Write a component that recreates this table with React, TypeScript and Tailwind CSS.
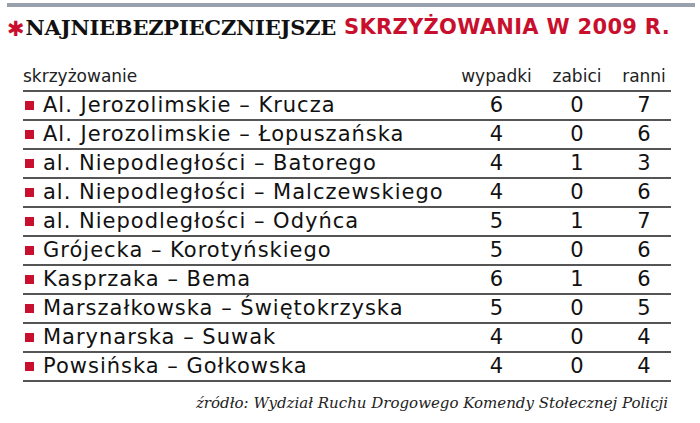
import React from "react";

const rows: [string, number, number, number][] = [
  ["Al. Jerozolimskie – Krucza", 6, 0, 7],
  ["Al. Jerozolimskie – Łopuszańska", 4, 0, 6],
  ["al. Niepodległości – Batorego", 4, 1, 3],
  ["al. Niepodległości – Malczewskiego", 4, 0, 6],
  ["al. Niepodległości – Odyńca", 5, 1, 7],
  ["Grójecka – Korotyńskiego", 5, 0, 6],
  ["Kasprzaka – Bema", 6, 1, 6],
  ["Marszałkowska – Świętokrzyska", 5, 0, 5],
  ["Marynarska – Suwak", 4, 0, 4],
  ["Powsińska – Gołkowska", 4, 0, 4],
];

export default function App() {
  return (
    <div className="w-[700px] h-[423px] bg-white overflow-hidden pt-[3px]">
      <div className="ml-[7px] w-[688px] pt-[4px] border-t-4 border-gray-400">
        <div className="flex items-center h-[34px] whitespace-nowrap">
          <span className="text-[#c8102e] text-[21px] leading-none mt-[3px] mr-[1px]" style={{ fontFamily: '"DejaVu Sans", sans-serif' }}>✱</span>
          <span className="text-[#111] text-[21px] font-bold tracking-[-0.2px]" style={{ fontFamily: '"DejaVu Serif", serif' }}>NAJNIEBEZPIECZNIEJSZE</span>
          <span className="text-[#c8102e] text-[21px] font-bold tracking-[0.3px] ml-[8px]" style={{ fontFamily: '"DejaVu Sans", sans-serif' }}>SKRZYŻOWANIA W 2009 R.</span>
        </div>
      </div>
      <div className="ml-[23px] w-[648px] mt-[16px]" style={{ fontFamily: '"DejaVu Sans", sans-serif' }}>
        <div className="grid grid-cols-[433px_81px_80px_54px] h-[31px] items-end pb-[5px] text-[17px] leading-none text-[#222] border-b-[2px] border-[#555]">
          <div>skrzyżowanie</div>
          <div className="text-center">wypadki</div>
          <div className="text-center">zabici</div>
          <div className="text-center">ranni</div>
        </div>
        {rows.map(([name, a, b, c]) => (
          <div key={name} className="grid grid-cols-[433px_81px_80px_54px] h-[29px] items-center text-[21px] leading-none text-[#111] border-b-[2px] border-[#555]">
            <div className="flex items-center">
              <span className="w-[9px] h-[9px] bg-[#c8102e] ml-[2px] mr-[9px]" />
              <span className="tracking-[1px]">{name}</span>
            </div>
            <div className="text-center">{a}</div>
            <div className="text-center">{b}</div>
            <div className="text-center">{c}</div>
          </div>
        ))}
      </div>
      <div className="w-[668px] text-right italic text-[15px] text-[#222] mt-[10px]" style={{ fontFamily: '"DejaVu Serif", serif' }}>
        źródło: Wydział Ruchu Drogowego Komendy Stołecznej Policji
      </div>
    </div>
  );
}
